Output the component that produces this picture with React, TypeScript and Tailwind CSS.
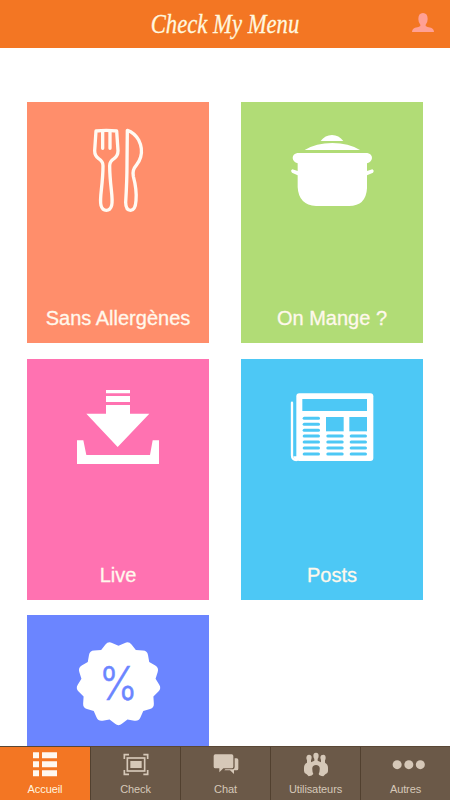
import type { ReactNode } from 'react';

const sans = "font-['Liberation_Sans',Arial,sans-serif]";

// 13 pointed seal: sharp notches, rounded tips
const SEAL_TIPS = 13;

function sealPoint(step: number, radius: number) {
    const angle = (Math.PI / SEAL_TIPS) * step - Math.PI / 2;
    return [160.5 + radius * Math.cos(angle), 144.5 + radius * Math.sin(angle)];
}

function between(a: number[], b: number[], t: number) {
    return a.map((v, i) => (v + (b[i] - v) * t).toFixed(1)).join(' ');
}

const sealPath =
    Array.from({ length: SEAL_TIPS }, (_, i) => {
        const start = sealPoint(i * 2, 112);
        const tip = sealPoint(i * 2 + 1, 130);
        const end = sealPoint(i * 2 + 2, 112);
        return `${i === 0 ? 'M' : 'L'}${between(start, tip, 0)}L${between(start, tip, 0.62)}Q${between(tip, tip, 0)} ${between(tip, end, 0.38)}`;
    }).join('') + 'Z';

function CutleryIcon() {
    return (
        <svg
            className="mt-[18px] h-[100px] w-[80px]"
            viewBox="-6 0 240 300"
            fill="none"
            stroke="#fffaf3"
            strokeWidth="10"
            strokeLinejoin="round"
            strokeLinecap="round"
        >
            <path d="M48 33Q79 29 110 33L114 92Q114 107 102 116Q89 124 89 137Q89 165 94 210Q98 244 95 256Q91 271 79 271Q67 271 63 256Q60 244 64 210Q69 165 69 137Q69 124 56 116Q44 107 44 92Z" />
            <path d="M68 34V85M90 34V85" />
            <path d="M142 31Q163 38 176 60Q189 86 182 111Q179 123 168 137Q156 151 160 169Q171 210 168 242Q166 271 152 271Q137 271 137 247Q141 180 141 134Z" />
        </svg>
    );
}

function PotIcon() {
    return (
        <svg className="mt-[23px] h-[90px] w-[105px]" viewBox="0 0 315 270" fill="#fff">
            <path d="M122 48Q135 30 156 30Q177 30 190 48Z" />
            <path d="M74 75Q108 54 157 54Q206 54 240 75Z" />
            <path d="M52 84H262Q276 87 276 99Q275 111 261 115V138L277 133Q284 137 279 143L261 151V190Q258 243 207 243H108Q56 240 53 187V151L36 143Q30 137 37 133L53 138V115Q39 111 38 99Q38 87 52 84Z" />
        </svg>
    );
}

function DownloadIcon() {
    return (
        <svg className="mt-[21px] h-[90px] w-[105px]" viewBox="3 0 315 270" fill="#fff">
            <path d="M123 30H195V40H123ZM123 48H195V66H123ZM123 75H195V101H253L158 201L64 101H123Z" />
            <path d="M36 181H55L64 225H255L263 181H282V252H36Z" />
        </svg>
    );
}

function NewspaperIcon() {
    const lines = [
        [68, 100],
        [68, 118],
        [68, 136],
        ...[153, 171, 189, 207].flatMap((y) => [
            [68, y],
            [139, y],
            [209, y],
        ]),
    ];

    return (
        <svg className="mt-[26px] h-[85px] w-[105px]" viewBox="0 0 315 255">
            <path
                d="M36 53V211Q36 225 49 225"
                fill="none"
                stroke="#fff"
                strokeWidth="7"
                strokeLinecap="round"
            />
            <rect x="49" y="25" width="231" height="203" rx="9" fill="#fff" />
            <path d="M40 214H53V228H46Z" fill="#fff" />
            <g fill="#4dc8f5">
                <rect x="67" y="42" width="194" height="36" />
                <rect x="138" y="96" width="53" height="43" />
                <rect x="208" y="96" width="53" height="43" />
                {lines.map(([x, y]) => (
                    <rect key={`${x}-${y}`} x={x} y={y - 4.5} width="52" height="9" rx="4.5" />
                ))}
            </g>
        </svg>
    );
}

function DiscountIcon() {
    return (
        <svg className="mt-[20px] h-[95px] w-[105px]" viewBox="3 0 315 285">
            <path d={sealPath} fill="#fff" />
            <text
                x="102"
                y="194"
                textLength="116"
                lengthAdjust="spacingAndGlyphs"
                fill="#6b85ff"
                stroke="#6b85ff"
                strokeWidth="1.5"
                className="font-[Inter,sans-serif] text-[141px] font-light"
            >
                %
            </text>
        </svg>
    );
}

type Tile = { id: string; label?: string; color: string; icon: ReactNode };

const tiles: Tile[] = [
    { id: 'allergens', label: 'Sans Allergènes', color: 'bg-[#ff8e6b]', icon: <CutleryIcon /> },
    { id: 'meals', label: 'On Mange ?', color: 'bg-[#b1dc76]', icon: <PotIcon /> },
    { id: 'live', label: 'Live', color: 'bg-[#ff72b1]', icon: <DownloadIcon /> },
    { id: 'posts', label: 'Posts', color: 'bg-[#4dc8f5]', icon: <NewspaperIcon /> },
    { id: 'discount', color: 'bg-[#6b85ff]', icon: <DiscountIcon /> },
];

const iconClass = 'h-[26px] w-[34px] overflow-visible';

const tabs = [
    {
        label: 'Accueil',
        icon: (
            <svg className={iconClass} viewBox="0 0 102 78" fill="#fff8ef">
                <path d="M15 4H33V22H15ZM42 4H87V22H42ZM15 31H33V49H15ZM42 31H87V49H42ZM15 58H33V76H15ZM42 58H87V76H42Z" />
            </svg>
        ),
    },
    {
        label: 'Check',
        icon: (
            <svg className={iconClass} viewBox="0 0 102 78" fill="none" stroke="#d6c8b8" strokeWidth="5">
                <path d="M16 24V11H30M73 11H86V24M16 57V70H30M73 70H86V57" />
                <rect x="25" y="21" width="52" height="39" />
                <rect x="34" y="30" width="34" height="21" fill="#d6c8b8" stroke="none" />
            </svg>
        ),
    },
    {
        label: 'Chat',
        icon: (
            <svg className={iconClass} viewBox="0 0 102 78" fill="#d6c8b8">
                <path d="M19 10H68Q73 10 73 15V47Q73 52 68 52H43L31 64V52H19Q14 52 14 47V15Q14 10 19 10Z" />
                <path d="M77 22H83Q88 22 88 27V53Q88 58 83 58H75V69L63 58H46L49 55H72Q77 54 77 48Z" />
            </svg>
        ),
    },
    {
        label: 'Utilisateurs',
        icon: (
            <svg className={iconClass} viewBox="0 0 102 78" fill="#d6c8b8">
                <path d="M51 5Q59 5 59 14Q59 20 56 24V29L66 34V27Q64 23 64 18Q65 11 73 11Q80 11 80 20Q80 25 78 28V35Q87 40 87 50V61Q87 67 79 70L73 76Q61 75 59 69Q63 60 62 50Q60 42 51 42Q42 42 40 50Q39 60 43 69Q40 75 29 76L23 70Q15 67 15 60V50Q15 39 24 35V28Q22 24 22 20Q23 11 30 11Q38 11 38 19Q38 24 36 28V34L46 29V24Q43 19 43 14Q43 5 51 5Z" />
            </svg>
        ),
    },
    {
        label: 'Autres',
        icon: (
            <svg className={iconClass} viewBox="0 0 102 78" fill="#d6c8b8">
                <circle cx="24.5" cy="41" r="13.5" />
                <circle cx="59.5" cy="41" r="13.5" />
                <circle cx="94" cy="41" r="13.5" />
            </svg>
        ),
    },
];

export default function App() {
    return (
        <div className={`flex h-[800px] w-[450px] flex-col overflow-hidden bg-white ${sans}`}>
            {/* Header */}
            <header className="grid h-12 shrink-0 grid-cols-[80px_1fr_80px] items-center bg-[#f37623]">
                <span />
                <h1 className="origin-center scale-x-[0.84] text-center font-['Liberation_Serif',serif] text-[27px] leading-none whitespace-nowrap text-[#fff7df] italic [-webkit-text-stroke:0.3px]">
                    Check My Menu
                </h1>
                <svg className="mr-4 ml-auto h-[22px] w-[22px]" viewBox="0 0 66 66" fill="#ffa095">
                    <path d="M33 0Q47 0 47 18Q47 29 41 35V39Q44 42 57 44Q66 48 66 57H0Q0 48 9 44Q22 42 25 39V35Q19 29 19 18Q19 0 33 0Z" />
                </svg>
            </header>

            {/* Menu tiles */}
            <main className="grid min-h-0 flex-1 auto-rows-[241px] grid-cols-[182px_182px] content-start gap-x-8 gap-y-[15.5px] overflow-hidden pt-[54px] pl-[27px]">
                {tiles.map((tile) => (
                    <button key={tile.id} className={`flex flex-col items-center ${tile.color}`}>
                        {tile.icon}
                        {tile.label && (
                            <span className="mt-auto pb-[11px] text-[20px] leading-7 text-[#fff8ec] [-webkit-text-stroke:0.3px]">
                                {tile.label}
                            </span>
                        )}
                    </button>
                ))}
            </main>

            {/* Tab bar */}
            <nav className="grid h-[54px] shrink-0 grid-cols-5 border-t border-[#594735] bg-[#6b5948]">
                {tabs.map((tab, index) => (
                    <button
                        key={tab.label}
                        className={`flex flex-col items-center pt-1 ${
                            index === 0
                                ? 'bg-[#f37623] text-[#fff3df]'
                                : 'border-l border-[#51402f] text-[#d6c8b8]'
                        }`}
                    >
                        {tab.icon}
                        <span className="mt-[3.5px] text-[11px] leading-4 tracking-[-0.1px]">{tab.label}</span>
                    </button>
                ))}
            </nav>
        </div>
    );
}
